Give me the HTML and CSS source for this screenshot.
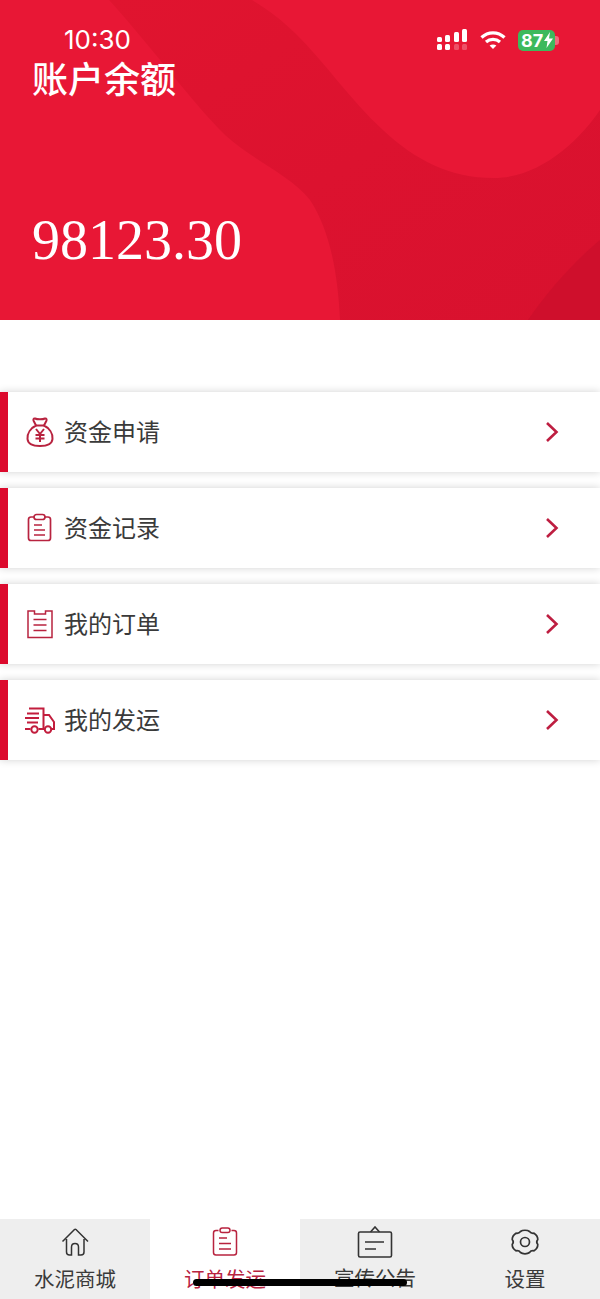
FILE: index.html
```html
<!DOCTYPE html>
<html>
<head>
    <title>账户余额</title>
    <link rel="stylesheet" href="styles.css">
</head>
<body>
    <div class="phone">
        <header class="balance">
            <svg class="balance-bg" viewBox="0 0 600 320" preserveAspectRatio="none">
                <defs>
                    <linearGradient id="band" x1="0" y1="0" x2="1" y2="1">
                        <stop offset="0" stop-color="#e0142f"/>
                        <stop offset="0.5" stop-color="#dc122f"/>
                        <stop offset="1" stop-color="#d8112e"/>
                    </linearGradient>
                </defs>
                <path fill="url(#band)" d="M109 0C150 45 190 100 225 135C255 162 290 175 310 200C330 230 338 275 340 320L600 320L600 110C580 140 540 178 494 178C450 178 415 160 383 130C350 100 325 62 295 33C280 18 265 8 252 0Z"/>
                <path fill="#cf0f2c" d="M528 320C548 290 578 258 600 240L600 320Z"/>
            </svg>
            <div class="status">
                <span class="time">10:30</span>
                <div class="status-icons">
                    <svg width="31" height="22" viewBox="0 0 31 22">
                        <g fill="#fff">
                            <rect x="0" y="8" width="5" height="5" rx="1.5"/>
                            <rect x="0" y="15" width="5" height="6" rx="1.5"/>
                            <rect x="8" y="6" width="5" height="7" rx="1.5"/>
                            <rect x="8" y="15" width="5" height="6" rx="1.5"/>
                            <rect x="17" y="3" width="5" height="10" rx="1.5"/>
                            <rect x="25" y="0" width="5" height="13" rx="1.5"/>
                        </g>
                        <g fill="#fff" opacity="0.25">
                            <rect x="17" y="15" width="5" height="6" rx="1.5"/>
                            <rect x="25" y="15" width="5" height="6" rx="1.5"/>
                        </g>
                    </svg>
                    <svg class="wifi" width="26" height="20" viewBox="0 0 26 20" fill="none" stroke="#fff" stroke-width="3.2">
                        <path d="M1.5 7.5C8 1.2 18 1.2 24.5 7.5"/>
                        <path d="M6 12C10 8.4 16 8.4 20 12"/>
                        <path d="M13 19L9.6 15.6C11.5 14 14.5 14 16.4 15.6Z" fill="#fff" stroke="none"/>
                    </svg>
                    <div class="battery">
                        <span>87</span>
                        <svg class="bolt" width="9" height="16" viewBox="0 0 9 16"><path fill="#fff" d="M6 0L0 9H3.5L2.5 16L9 6.5H5Z"/></svg>
                        <span class="battery-tip"></span>
                    </div>
                </div>
            </div>
            <h1 class="balance-title">账户余额</h1>
            <div class="balance-amount">98123.30</div>
        </header>

        <main class="menu">
            <a class="menu-row">
                <svg class="menu-icon" viewBox="0 0 32 32" fill="none" stroke="#b8233f" stroke-width="2" stroke-linejoin="round">
                    <path d="M11 2.500C13 3.500 19 3.500 21 2.500C22.500 2.200 23 3.500 22.300 5L20 9.500C25 12 29 17 28.500 23C28 28.500 23 30 16 30C9 30 4 28.500 3.500 23C3 17 7 12 12 9.500L9.700 5C9 3.500 9.500 2.200 11 2.500Z"/>
                    <path d="M12 9.500H20"/>
                    <path d="M12 13L16 18L20 13M16 18V26M11.500 19H20.500M11.500 22.500H20.500"/>
                </svg>
                <span class="menu-label">资金申请</span>
                <svg class="chevron" viewBox="0 0 14 22" fill="none" stroke="#be1e41" stroke-width="2.600"><path d="M2 2L11.500 11L2 20"/></svg>
            </a>
            <a class="menu-row">
                <svg class="menu-icon" viewBox="0 0 32 32" fill="none" stroke="#b8233f" stroke-width="1.700">
                    <path d="M10 5H7C5.500 5 4.500 6 4.500 7.500V26C4.500 27.500 5.500 28.500 7 28.500H24C25.500 28.500 26.500 27.500 26.500 26V7.500C26.500 6 25.500 5 24 5H21"/>
                    <rect x="10" y="2.500" width="11" height="5" rx="2.500"/>
                    <path d="M10 13H18M10 18H21M10 23H21"/>
                </svg>
                <span class="menu-label">资金记录</span>
                <svg class="chevron" viewBox="0 0 14 22" fill="none" stroke="#be1e41" stroke-width="2.600"><path d="M2 2L11.500 11L2 20"/></svg>
            </a>
            <a class="menu-row">
                <svg class="menu-icon" viewBox="0 0 32 32" fill="none" stroke="#b8233f" stroke-width="1.500">
                    <path d="M10.500 3H4V29.500H28V3H21.500V6H10.500Z"/>
                    <path d="M9.500 11.500H22.500M9.500 17H22.500M9.500 22.500H22.500"/>
                </svg>
                <span class="menu-label">我的订单</span>
                <svg class="chevron" viewBox="0 0 14 22" fill="none" stroke="#be1e41" stroke-width="2.600"><path d="M2 2L11.500 11L2 20"/></svg>
            </a>
            <a class="menu-row">
                <svg class="menu-icon" viewBox="0 0 32 32" fill="none" stroke="#c21d3d" stroke-width="2">
                    <path d="M5 4.500H19.500V25H14.500M6.500 25H1"/>
                    <path d="M19.500 11H25L30 18V25H27.500M20 25H19.500"/>
                    <path d="M3 9.500H15M1 14H15M3 18.500H14"/>
                    <circle cx="10.500" cy="25.500" r="3.200"/>
                    <circle cx="24" cy="25.500" r="3.200"/>
                </svg>
                <span class="menu-label">我的发运</span>
                <svg class="chevron" viewBox="0 0 14 22" fill="none" stroke="#be1e41" stroke-width="2.600"><path d="M2 2L11.500 11L2 20"/></svg>
            </a>
        </main>

        <nav class="tabs">
            <a class="tab">
                <svg class="tab-icon" viewBox="0 0 30 30" fill="none" stroke="#333" stroke-width="1.500">
                    <path d="M2.500 14.500L14.500 2.500C15 2 15.500 2 16 2.500L28 14.500M6.500 12V25C6.500 27 7.500 28 9.500 28H11.500V20C11.500 18 13 16.500 15 16.500S18.500 18 18.500 20V28H21C23 28 24 27 24 25V12"/>
                </svg>
                <span>水泥商城</span>
            </a>
            <a class="tab tab-active">
                <svg class="tab-icon" viewBox="0 0 30 30" fill="none" stroke="#b8233f" stroke-width="1.500">
                    <path d="M8.500 3.500H6C4.500 3.500 3.500 4.500 3.500 6V25.500C3.500 27 4.500 28 6 28H24C25.500 28 26.500 27 26.500 25.500V6C26.500 4.500 25.500 3.500 24 3.500H21.500"/>
                    <rect x="10" y="1" width="10" height="4.500" rx="2.250"/>
                    <path d="M9 11H17M9 16.500H21M9 22H21"/>
                </svg>
                <span>订单发运</span>
            </a>
            <a class="tab">
                <svg class="tab-icon tab-icon-wide" viewBox="0 0 36 32" fill="none" stroke="#333" stroke-width="1.600">
                    <rect x="1.500" y="6" width="33" height="25" rx="1.500"/>
                    <path d="M13.500 6L18 1L22.500 6"/>
                    <path d="M8 16H27M8 23H19"/>
                </svg>
                <span>宣传公告</span>
            </a>
            <a class="tab">
                <svg class="tab-icon" viewBox="0 0 30 30" fill="none" stroke="#333" stroke-width="1.700" stroke-linejoin="round">
                    <path d="M10.500 4.500C12.500 2.800 17.500 2.800 19.500 4.500C20.500 6 22 6.500 24 6.200C26 7.500 27.800 10.500 27.800 12.500C26.500 14 26.500 16 27.800 17.500C27.800 19.500 26 22.500 24 23.800C22 23.500 20.500 24 19.500 25.500C17.500 27.200 12.500 27.200 10.500 25.500C9.500 24 8 23.500 6 23.800C4 22.500 2.200 19.500 2.200 17.500C3.500 16 3.500 14 2.200 12.500C2.200 10.500 4 7.500 6 6.200C8 6.500 9.500 6 10.500 4.500Z"/>
                    <circle cx="15" cy="15" r="4.500"/>
                </svg>
                <span>设置</span>
            </a>
        </nav>
        <div class="home-bar"></div>
    </div>
</body>
</html>
```

FILE: styles.css
```css
* { box-sizing: border-box; }
html, body { margin: 0; padding: 0; }
body { font-family: "Noto Sans CJK SC", "Noto Sans", sans-serif; background: #fff; }

.phone { position: relative; width: 600px; height: 1299px; display: flex; flex-direction: column; overflow: hidden; }

/* top red card */
.balance { position: relative; height: 320px; flex: none; background: #e81735; color: #fff; padding: 55px 32px 0; }
.balance-bg { position: absolute; left: 0; top: 0; width: 100%; height: 100%; }
.balance-title { position: relative; margin: 0; font-size: 36px; font-weight: 500; line-height: 44px; }
.balance-amount { position: relative; margin-top: 106px; font-family: "Liberation Serif", serif; font-size: 56px; line-height: 70px; }

.status { position: absolute; left: 64px; right: 45px; top: 25px; display: flex; justify-content: space-between; align-items: center; }
.time { font-family: "Inter", sans-serif; font-size: 26px; line-height: 30px; }
.status-icons { display: flex; align-items: center; gap: 12px; }
.battery { position: relative; display: flex; align-items: center; width: 37px; height: 21px; border-radius: 5px; background: #3db95c; padding-left: 3px; font-family: "Inter", sans-serif; font-size: 18px; font-weight: 700; line-height: 21px; }
.battery-tip { position: absolute; right: -4px; top: 6px; width: 4px; height: 9px; border-radius: 0 3px 3px 0; background: #f06a7c; }
.bolt { flex: none; margin-left: 1px; }

/* menu rows */
.menu { flex: 1; padding-top: 72px; display: flex; flex-direction: column; gap: 16px; }
.menu-row { display: flex; align-items: center; height: 80px; flex: none; background: #fff; border-left: 8px solid #dc0a2d; box-shadow: 0 0 8px rgba(0, 0, 0, 0.18); padding: 0 41px 0 16px; }
.menu-icon { width: 32px; height: 32px; flex: none; }
.menu-label { flex: 1; margin-left: 8px; padding-bottom: 2px; font-size: 24px; line-height: 32px; color: #3a3a3a; }
.chevron { width: 14px; height: 22px; flex: none; }

/* bottom tabs */
.tabs { display: flex; height: 80px; flex: none; background: #eee; }
.tab { width: 150px; display: flex; flex-direction: column; align-items: center; padding-top: 8px; font-size: 20.500px; line-height: 28px; color: #3a3a3a; }
.tab-active { background: #fff; color: #b8233f; }
.tab-icon { width: 30px; height: 30px; flex: none; margin-bottom: 7px; }
.tab-icon-wide { width: 36px; height: 32px; margin-bottom: 5px; margin-top: -1px; }

.home-bar { position: absolute; left: 193px; top: 1279px; width: 214px; height: 7px; border-radius: 4px; background: #000; }
```
